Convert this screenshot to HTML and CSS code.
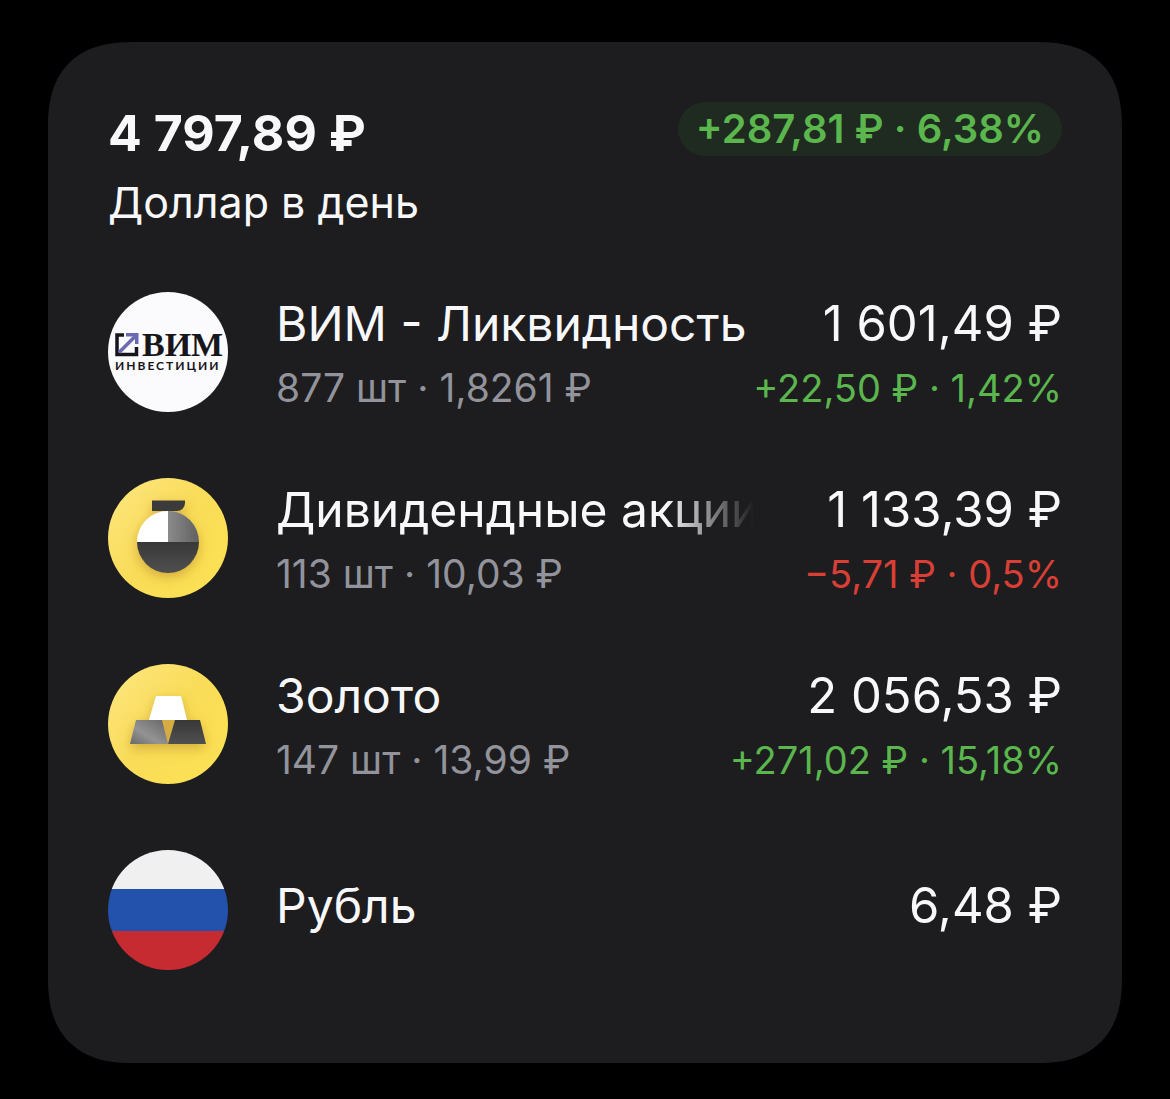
FILE: index.html
```html
<!DOCTYPE html>
<html lang="ru">
<head>
    <meta charset="utf-8">
    <title>Доллар в день</title>
    <link rel="stylesheet" href="styles.css">
</head>
<body>
    <main class="widget">
        <header class="summary">
            <div>
                <h1 class="total">4 797,89 ₽</h1>
                <p class="portfolio">Доллар в день</p>
            </div>
            <span class="badge">+287,81 ₽ · 6,38%</span>
        </header>

        <ul class="assets">
            <li class="asset">
                <svg class="icon" viewBox="0 0 120 120" role="img" aria-label="ВИМ Инвестиции">
                    <circle cx="60" cy="60" r="60" fill="#fbfbfd"/>
                    <path d="M16 43H9V62.500H28.500V55" fill="none" stroke="#17171b" stroke-width="3.500"/>
                    <path d="M11 60.500L27 44.500" stroke="#6a6ab0" stroke-width="3.500"/>
                    <path d="M18 41H30.500V52H27V44.500H18Z" fill="#6a6ab0"/>
                    <text class="logo_name" x="34" y="64" fill="#17171b">ВИМ</text>
                    <text class="logo_sub" x="7" y="78" fill="#17171b">ИНВЕСТИЦИИ</text>
                </svg>
                <div class="info">
                    <span class="name">ВИМ - Ликвидность</span>
                    <span class="detail">877 шт · 1,8261 ₽</span>
                </div>
                <div class="amounts">
                    <span class="value">1 601,49 ₽</span>
                    <span class="change up">+22,50 ₽ · 1,42%</span>
                </div>
            </li>

            <li class="asset">
                <svg class="icon" viewBox="0 0 120 120" aria-hidden="true">
                    <defs>
                        <linearGradient id="yellow" x1="0" y1="0.2" x2="0.7" y2="0.8">
                            <stop offset="0" stop-color="#fce57a"/>
                            <stop offset="0.6" stop-color="#f9dc58"/>
                            <stop offset="1" stop-color="#fbdf54"/>
                        </linearGradient>
                        <linearGradient id="grey" x1="0" y1="0" x2="1" y2="0">
                            <stop offset="0" stop-color="#8b8b8b"/>
                            <stop offset="1" stop-color="#606060"/>
                        </linearGradient>
                        <linearGradient id="dark" x1="0" y1="0" x2="0" y2="1">
                            <stop offset="0" stop-color="#383838"/>
                            <stop offset="1" stop-color="#505050"/>
                        </linearGradient>
                        <filter id="shadow" x="-50%" y="-50%" width="200%" height="200%">
                            <feDropShadow dx="0" dy="4" stdDeviation="6" flood-color="#a87a20" flood-opacity="0.5"/>
                        </filter>
                    </defs>
                    <circle cx="60" cy="60" r="60" fill="url(#yellow)"/>
                    <g filter="url(#shadow)">
                        <path d="M44 22.500H77V25A8 8 0 0 1 69 33H44Z" fill="#3a3a3a"/>
                        <path d="M60 33A31 31 0 0 0 29 64H60Z" fill="#fff"/>
                        <path d="M60 33A31 31 0 0 1 91 64H60Z" fill="url(#grey)"/>
                        <path d="M29 64A31 31 0 0 0 91 64Z" fill="url(#dark)"/>
                    </g>
                </svg>
                <div class="info">
                    <span class="name fade">Дивидендные акции</span>
                    <span class="detail">113 шт · 10,03 ₽</span>
                </div>
                <div class="amounts">
                    <span class="value">1 133,39 ₽</span>
                    <span class="change down">−5,71 ₽ · 0,5%</span>
                </div>
            </li>

            <li class="asset">
                <svg class="icon" viewBox="0 0 120 120" aria-hidden="true">
                    <defs>
                        <linearGradient id="bar_left" x1="0" y1="1" x2="1" y2="0">
                            <stop offset="0" stop-color="#686868"/>
                            <stop offset="0.4" stop-color="#939393"/>
                            <stop offset="1" stop-color="#666"/>
                        </linearGradient>
                    </defs>
                    <circle cx="60" cy="60" r="60" fill="url(#yellow)"/>
                    <g filter="url(#shadow)">
                        <path d="M54 56H67L60 80Z" fill="#d5ab42"/>
                        <path d="M48 32H73L79 56H41Z" fill="#fff"/>
                        <path d="M28 56H54L60 80H22Z" fill="url(#bar_left)"/>
                        <path d="M67 56H92L98 80H60Z" fill="url(#dark)"/>
                    </g>
                </svg>
                <div class="info">
                    <span class="name">Золото</span>
                    <span class="detail">147 шт · 13,99 ₽</span>
                </div>
                <div class="amounts">
                    <span class="value">2 056,53 ₽</span>
                    <span class="change up">+271,02 ₽ · 15,18%</span>
                </div>
            </li>

            <li class="asset">
                <svg class="icon" viewBox="0 0 120 120" aria-hidden="true">
                    <clipPath id="round"><circle cx="60" cy="60" r="60"/></clipPath>
                    <g clip-path="url(#round)">
                        <path d="M0 0H120V39H0Z" fill="#f0f0f0"/>
                        <path d="M0 39H120V81H0Z" fill="#2352ad"/>
                        <path d="M0 81H120V120H0Z" fill="#c62b31"/>
                    </g>
                </svg>
                <div class="info single">
                    <span class="name">Рубль</span>
                </div>
                <div class="amounts single">
                    <span class="value">6,48 ₽</span>
                </div>
            </li>
        </ul>
    </main>
</body>
</html>
```
FILE: styles.css
```css
* {
    box-sizing: border-box;
}

body {
    margin: 0;
    padding: 42px 48px 36px;
    background-color: #000;
    color: #f8f8fa;
    font-family: Inter, "Liberation Sans", sans-serif;
}

h1, p, ul {
    margin: 0;
    padding: 0;
}

.widget {
    padding: 60px 60px 93px;
    border-radius: 86px;
    corner-shape: superellipse(1.3);
    background-color: #1d1d1f;
}

.summary {
    display: flex;
    justify-content: space-between;
    align-items: flex-start;
    margin-bottom: 60px;
}

.total {
    font-size: 50px;
    font-weight: 700;
    line-height: 62px;
}

.portfolio {
    padding-top: 8px;
    font-size: 43px;
    line-height: 60px;
}

.badge {
    padding: 0 18px;
    border-radius: 27px;
    background-color: #1f2a20;
    color: #5ab64d;
    font-size: 40px;
    font-weight: 600;
    line-height: 54px;
    white-space: nowrap;
}

.assets {
    display: flex;
    flex-direction: column;
    gap: 66px;
    list-style: none;
}

.asset {
    display: flex;
    align-items: center;
}

.icon {
    flex: none;
    width: 120px;
    height: 120px;
    margin-right: 48px;
}

.logo_name {
    font-family: "Liberation Serif", serif;
    font-size: 34px;
    font-weight: 700;
}

.logo_sub {
    font-family: Lato, sans-serif;
    font-size: 12px;
    font-weight: 700;
    letter-spacing: 2px;
}

.info, .amounts {
    display: flex;
    flex-direction: column;
    gap: 8px;
    white-space: nowrap;
}

.info {
    flex: 1;
    min-width: 0;
}

.amounts {
    align-items: flex-end;
    min-width: 308px;
}

.single {
    padding-bottom: 8px;
}

.name, .value {
    font-size: 48px;
    line-height: 64px;
}

.value {
    font-size: 49px;
}

/* long names dissolve before the amounts column */
.fade {
    overflow: hidden;
    -webkit-mask-image: linear-gradient(to left, transparent, #000 88px);
    mask-image: linear-gradient(to left, transparent, #000 88px);
}

.detail, .change {
    font-size: 38px;
    line-height: 48px;
}

.detail {
    font-size: 39px;
    color: #92939b;
}

.up {
    color: #5ab64d;
}

.down {
    color: #d93f35;
}
```
